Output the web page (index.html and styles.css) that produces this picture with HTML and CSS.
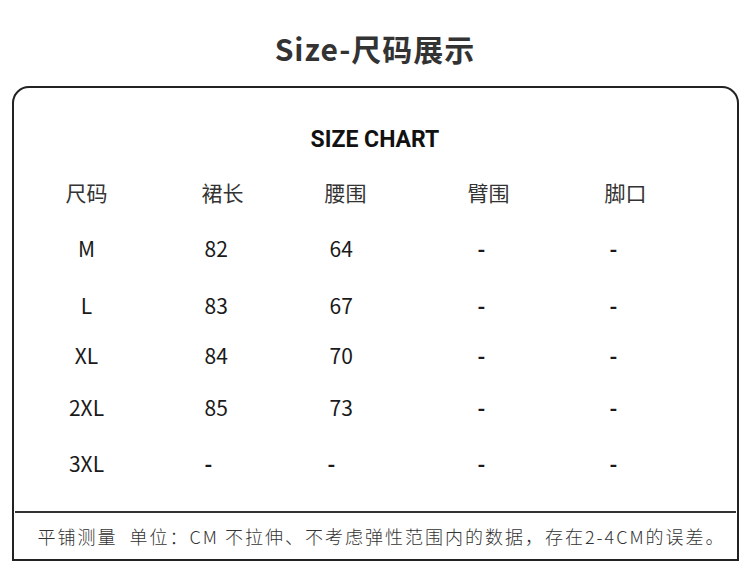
FILE: index.html
```html
<!DOCTYPE html>
<html lang="zh">
<head>
<meta charset="utf-8">
<link rel="stylesheet" href="styles.css">
</head>
<body>
<div class="page">
  <h1 class="title">Size-尺码展示</h1>
  <div class="card">
    <div class="chart-title">SIZE CHART</div>
    <div class="grid">
      <div class="c1 head">尺码</div>
      <div class="c2 head">裙长</div>
      <div class="c3 head">腰围</div>
      <div class="c4 head">臂围</div>
      <div class="c5 head">脚口</div>

      <div class="c1 val">M</div>
      <div class="c2 val">82</div>
      <div class="c3 val">64</div>
      <div class="c4 val dash">-</div>
      <div class="c5 val dash">-</div>

      <div class="c1 val">L</div>
      <div class="c2 val">83</div>
      <div class="c3 val">67</div>
      <div class="c4 val dash">-</div>
      <div class="c5 val dash">-</div>

      <div class="c1 val">XL</div>
      <div class="c2 val">84</div>
      <div class="c3 val">70</div>
      <div class="c4 val dash">-</div>
      <div class="c5 val dash">-</div>

      <div class="c1 val">2XL</div>
      <div class="c2 val">85</div>
      <div class="c3 val">73</div>
      <div class="c4 val dash">-</div>
      <div class="c5 val dash">-</div>

      <div class="c1 val">3XL</div>
      <div class="c2 val dash">-</div>
      <div class="c3 val dash">-</div>
      <div class="c4 val dash">-</div>
      <div class="c5 val dash">-</div>
    </div>
    <div class="divider"></div>
    <div class="note">平铺测量&nbsp;&nbsp;单位：CM 不拉伸、不考虑弹性范围内的数据，存在2-4CM的误差。</div>
  </div>
</div>
</body>
</html>
```
FILE: styles.css
```css
html, body {
  margin: 0;
  padding: 0;
  background: #fff;
}
body {
  width: 750px;
  height: 574px;
  overflow: hidden;
  font-family: "Noto Sans CJK SC", "Noto Sans", sans-serif;
  color: #222;
}
.page {
  display: flex;
  flex-direction: column;
  align-items: center;
}
.title {
  margin: 0;
  height: 86px;
  padding-top: 33px;
  box-sizing: border-box;
  line-height: 1;
  font-size: 30px;
  font-weight: 700;
  letter-spacing: 1px;
  color: #333;
  text-align: center;
}
.card {
  width: 727px;
  height: 475px;
  box-sizing: border-box;
  border: 2px solid #222;
  border-radius: 17px 17px 0 0;
  display: flex;
  flex-direction: column;
}
.chart-title {
  height: 76px;
  padding-top: 39px;
  box-sizing: border-box;
  text-align: center;
  font-family: Roboto, "Liberation Sans", sans-serif;
  font-weight: 700;
  font-size: 23px;
  line-height: 26px;
  color: #111;
}
.grid {
  display: grid;
  grid-template-columns: 154px 123px 143px 137px 1fr;
  grid-template-rows: 56px 56px 58px 42px 62px 50px;
  align-items: center;
  padding-left: 34px;
}
.head {
  font-size: 21px;
  color: #333;
  line-height: 1;
}
.val {
  font-size: 21px;
  color: #1a1a1a;
  line-height: 1;
}
.c1 {
  width: 78px;
  text-align: center;
}
.c2.val { padding-left: 3px; }
.c3.val { padding-left: 5px; }
.c4.val { padding-left: 10px; }
.c5.val { padding-left: 5px; }
.c3.dash { padding-left: 3px; }
.dash {
  font-weight: 700;
}
.divider {
  margin: 23px 1px 0;
  height: 2px;
  background: #333;
}
.note {
  flex: 1;
  display: flex;
  align-items: center;
  padding-left: 24px;
  font-size: 18px;
  letter-spacing: 2px;
  color: #333;
  font-weight: 300;
}
```
